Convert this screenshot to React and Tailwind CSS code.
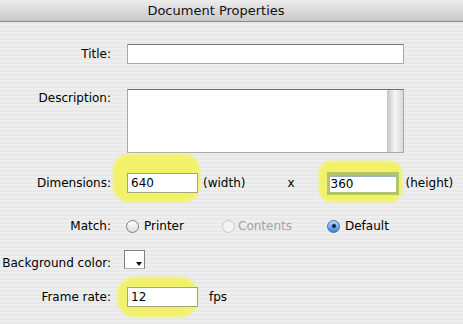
const Label = ({ children, className = '' }) => (
	<div className={`w-[111px] shrink-0 text-right leading-[14px] ${className}`}>{children}</div>
);

const Radio = ({ checked, disabled }) => {
	if (checked) {
		return (
			<span className="w-[13px] h-[13px] rounded-full border border-[#3f6fb4] bg-linear-to-b from-[#b9d6f8] to-[#3c82dc] flex items-center justify-center shrink-0">
				<span className="w-[4px] h-[4px] rounded-full bg-[#14233a]" />
			</span>
		);
	}
	return (
		<span
			className={`w-[13px] h-[13px] rounded-full border shrink-0 ${
				disabled ? 'border-[#c9c9c9] bg-[#f4f4f4]' : 'border-[#7d7d7d] bg-linear-to-b from-white to-[#dedede]'
			}`}
		/>
	);
};

const Highlight = ({ className }) => (
	<div className={`absolute bg-[#f2f26a] blur-[1px] ${className}`} />
);

const App = () => {
	return (
		<div className="w-[463px] h-[324px] overflow-hidden text-[12px] text-black font-['DejaVu_Sans',sans-serif] bg-[repeating-linear-gradient(to_bottom,#eeeeee_0px,#eeeeee_2px,#e8e8e8_2px,#e8e8e8_4px)]">
			{/* Title bar */}
			<div className="h-[22px] border-b border-[#8a8a8a] bg-linear-to-b from-[#ededed] to-[#c8c8c8] flex items-center justify-center pr-[31px] text-[13px] text-[#111]">
				Document Properties
			</div>

			<div className="flex flex-col">
				{/* Title */}
				<div className="flex items-center mt-[22px] h-[20px]">
					<Label>Title:</Label>
					<div className="ml-[16px] w-[277px] h-[20px] bg-white border border-[#a9a9a9] border-t-[#7a7a7a]" />
				</div>

				{/* Description */}
				<div className="flex items-start mt-[25px]">
					<Label className="pt-[2px]">Description:</Label>
					<div className="ml-[16px] w-[277px] h-[64px] bg-white border border-[#a9a9a9] border-t-[#6f6f6f] flex justify-end">
						<div className="w-[16px] h-full bg-linear-to-r from-[#c4c4c4] via-[#f7f7f7] to-[#d9d9d9]" />
					</div>
				</div>

				{/* Dimensions */}
				<div className="flex items-center mt-[20px] h-[20px]">
					<Label>Dimensions:</Label>
					<div className="relative ml-[16px]">
						<Highlight className="left-[-14px] top-[-19px] w-[87px] h-[48px] rounded-[16px]" />
						<div className="relative w-[71px] h-[20px] bg-white border border-[#a5a57a] pl-[3px] leading-[18px]">640</div>
					</div>
					<span className="ml-[5px]">(width)</span>
					<span className="ml-[42px]">x</span>
					<div className="relative ml-[32px]">
						<Highlight className="left-[-8px] top-[-11px] w-[83px] h-[41px] rounded-[12px]" />
						<div className="relative w-[72px] h-[23px] border-[3px] border-[#b2c56a] bg-white">
							<div className="h-[2px] bg-[#9fb3c8]" />
							<div className="pl-[1px] leading-[15px]">360</div>
						</div>
					</div>
					<span className="ml-[7px]">(height)</span>
				</div>

				{/* Match */}
				<div className="flex items-center mt-[23px] h-[20px]">
					<Label>Match:</Label>
					<div className="ml-[15px] flex items-center">
						<div className="w-[96px] flex items-center gap-[5px]">
							<Radio />
							<span>Printer</span>
						</div>
						<div className="w-[105px] flex items-center gap-[3px] text-[#a3a3a3]">
							<Radio disabled />
							<span>Contents</span>
						</div>
						<div className="flex items-center gap-[5px]">
							<Radio checked />
							<span>Default</span>
						</div>
					</div>
				</div>

				{/* Background color */}
				<div className="flex items-start mt-[14px] h-[19px]">
					<Label className="pt-[6px]">Background color:</Label>
					<div className="ml-[13px] w-[21px] h-[19px] bg-white border border-[#7f7f7f] border-b-[#b0b0b0] flex items-end justify-end p-[2px]">
						<svg width="6" height="4" viewBox="0 0 6 4">
							<path d="M0 0h6L3 4z" fill="#111" />
						</svg>
					</div>
				</div>

				{/* Frame rate */}
				<div className="flex items-center mt-[18px] h-[20px]">
					<Label>Frame rate:</Label>
					<div className="relative ml-[16px]">
						<Highlight className="left-[-10px] top-[-10px] w-[81px] h-[40px] rounded-[18px]" />
						<div className="relative w-[71px] h-[20px] bg-white border border-[#a5a57a] pl-[3px] leading-[18px]">12</div>
					</div>
					<span className="ml-[11px]">fps</span>
				</div>
			</div>
		</div>
	);
};

export default App;
